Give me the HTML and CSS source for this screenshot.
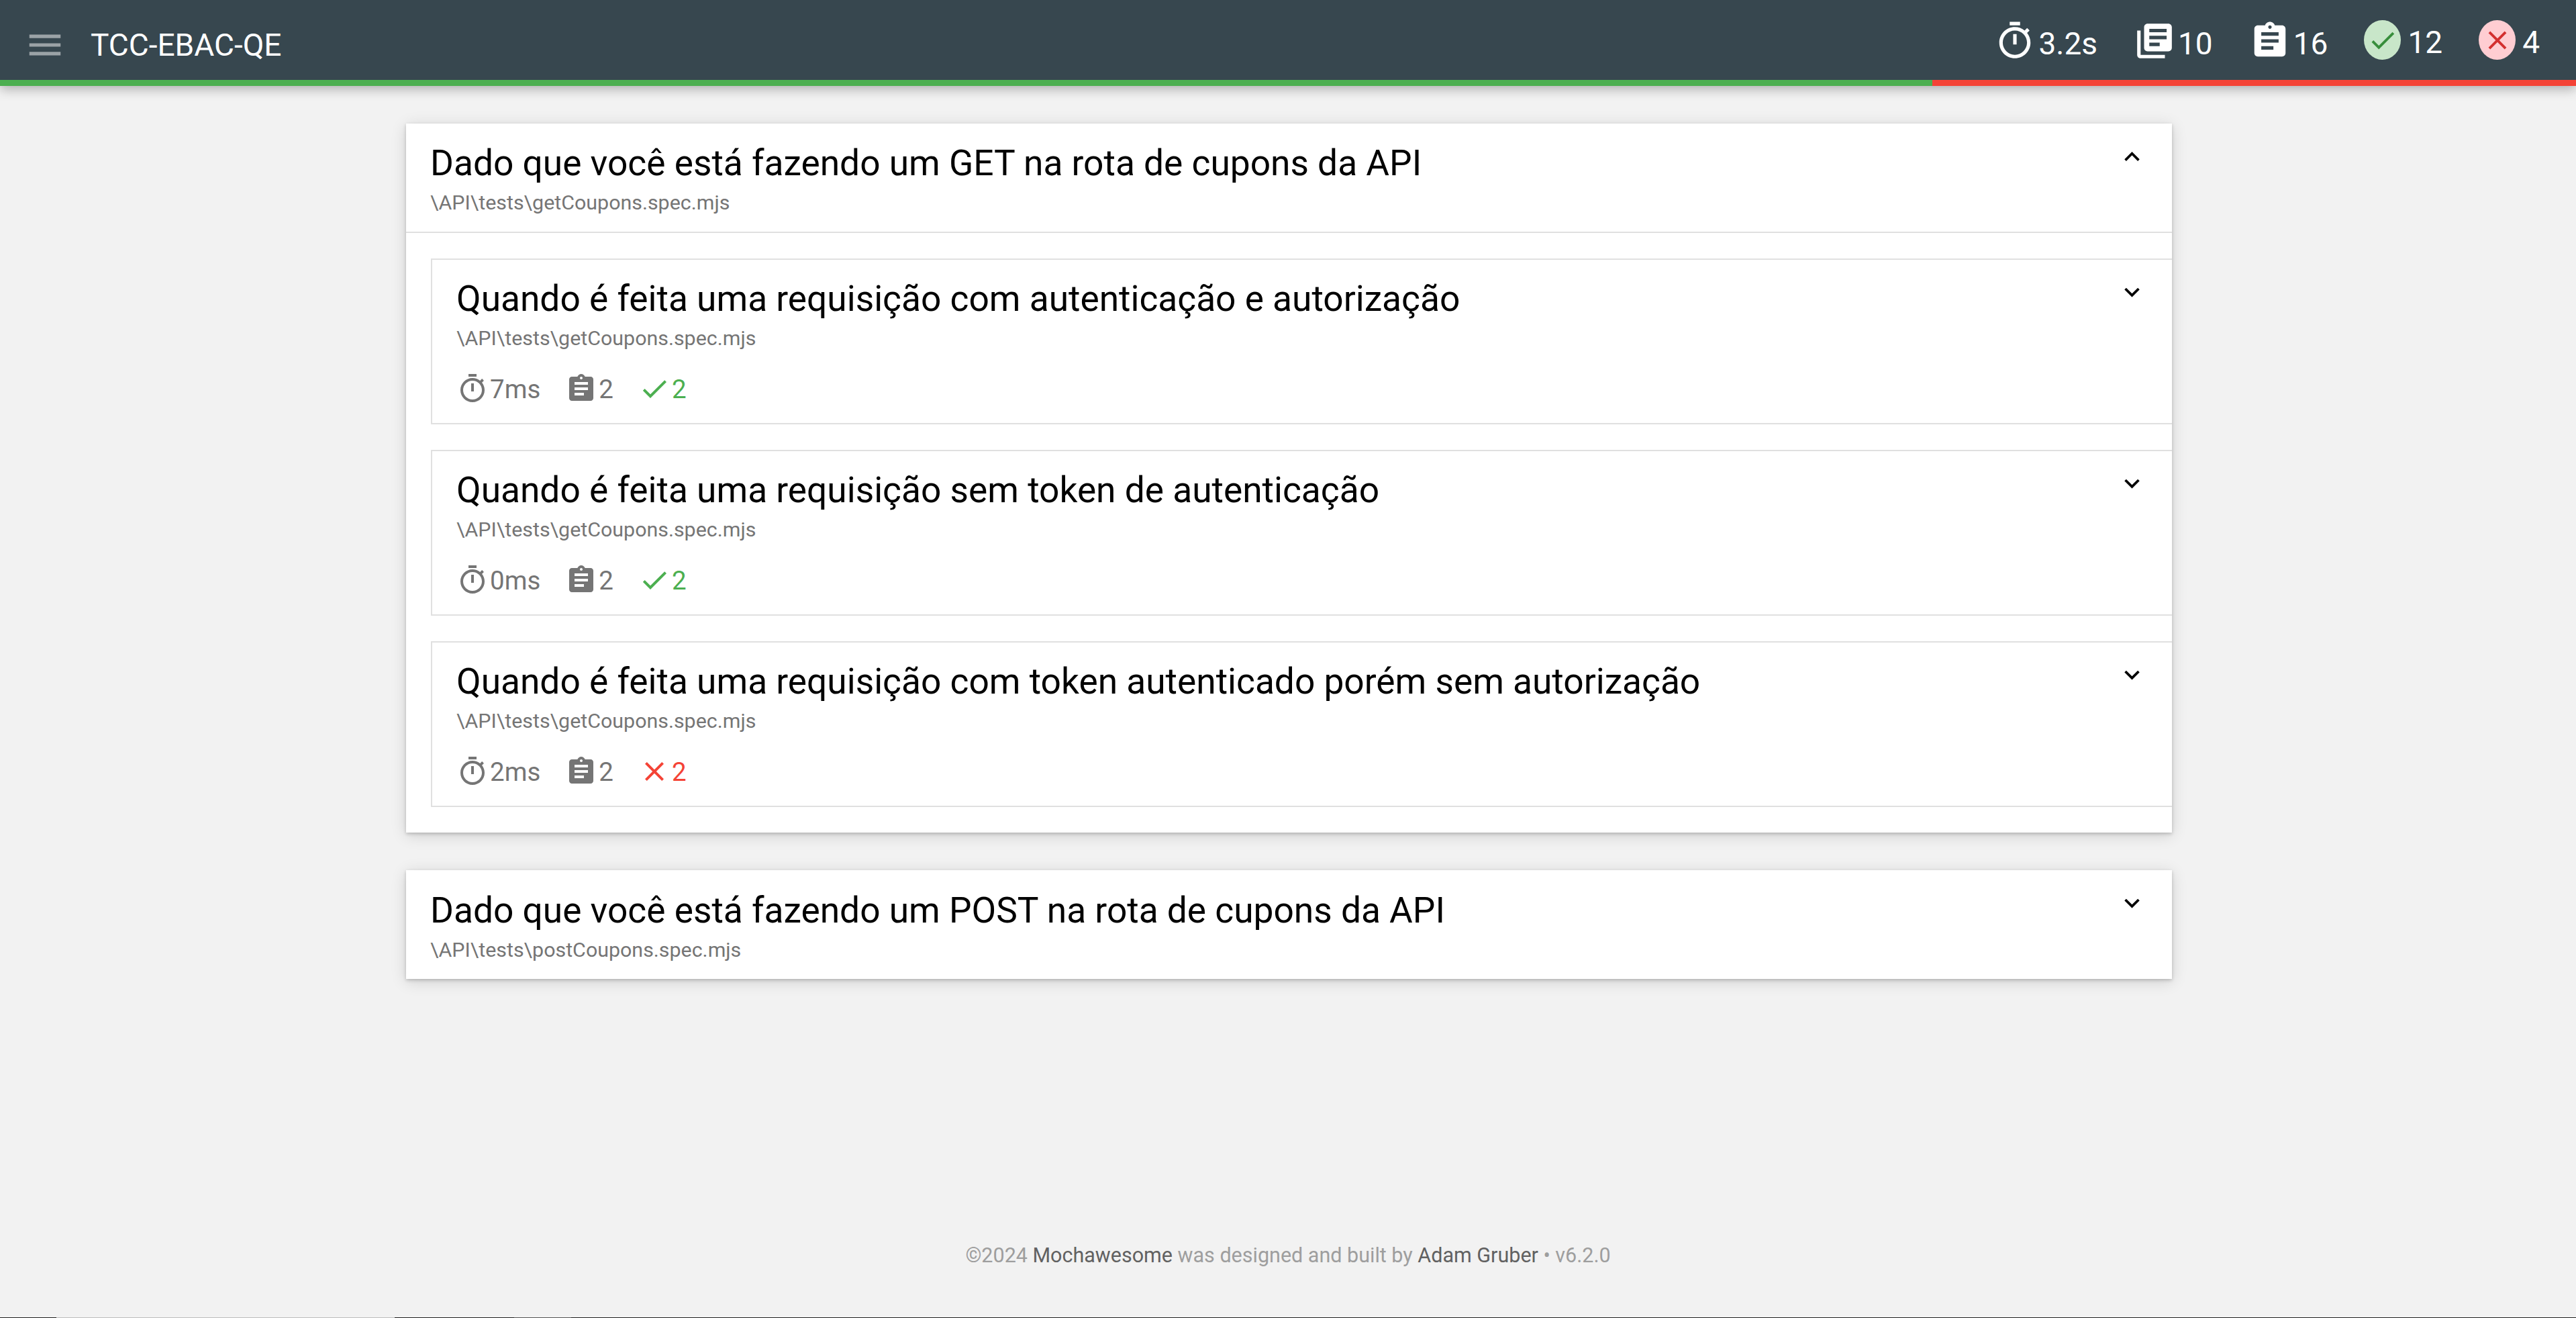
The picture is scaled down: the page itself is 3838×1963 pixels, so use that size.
FILE: index.html
```html
<!DOCTYPE html>
<html lang="pt-BR">
<head>
    <meta charset="UTF-8">
    <meta name="viewport" content="width=device-width, initial-scale=1.0">
    <title>TCC-EBAC-QE</title>
    <link rel="stylesheet" href="styles.css">
</head>
<body>
    <svg class="icon-defs" aria-hidden="true">
        <symbol id="i-menu" viewBox="0 0 24 24"><path d="M3 18h18v-2H3v2zm0-5h18v-2H3v2zm0-7v2h18V6H3z"/></symbol>
        <symbol id="i-timer" viewBox="0 0 24 24"><path d="M15 1H9v2h6V1zm-4 13h2V8h-2v6zm8.03-6.61l1.42-1.42c-.43-.51-.9-.99-1.41-1.41l-1.42 1.42C16.07 4.74 14.12 4 12 4c-4.97 0-9 4.03-9 9s4.02 9 9 9 9-4.03 9-9c0-2.12-.74-4.07-1.97-5.61zM12 20c-3.87 0-7-3.13-7-7s3.13-7 7-7 7 3.13 7 7-3.13 7-7 7z"/></symbol>
        <symbol id="i-books" viewBox="0 0 24 24"><path d="M4 6H2v14c0 1.1.9 2 2 2h14v-2H4V6zm16-4H8c-1.1 0-2 .9-2 2v12c0 1.1.9 2 2 2h12c1.1 0 2-.9 2-2V4c0-1.1-.9-2-2-2zm-1 9H9V9h10v2zm-4 4H9v-2h6v2zm4-8H9V5h10v2z"/></symbol>
        <symbol id="i-assign" viewBox="0 0 24 24"><path d="M19 3h-4.18C14.4 1.84 13.3 1 12 1c-1.3 0-2.4.84-2.82 2H5c-1.1 0-2 .9-2 2v14c0 1.1.9 2 2 2h14c1.1 0 2-.9 2-2V5c0-1.1-.9-2-2-2zm-7 0c.55 0 1 .45 1 1s-.45 1-1 1-1-.45-1-1 .45-1 1-1zm2 14H7v-2h7v2zm3-4H7v-2h10v2zm0-4H7V7h10v2z"/></symbol>
        <symbol id="i-check" viewBox="0 0 24 24"><path d="M9 16.17L4.83 12l-1.42 1.41L9 19 21 7l-1.41-1.41z"/></symbol>
        <symbol id="i-close" viewBox="0 0 24 24"><path d="M19 6.41L17.59 5 12 10.59 6.41 5 5 6.41 10.59 12 5 17.59 6.41 19 12 13.41 17.59 19 19 17.59 13.41 12z"/></symbol>
        <symbol id="i-down" viewBox="0 0 24 24"><path d="M7.41 7.84L12 12.42l4.59-4.58L18 9.25l-6 6-6-6z"/></symbol>
        <symbol id="i-up" viewBox="0 0 24 24"><path d="M7.41 15.41L12 10.83l4.59 4.58L18 14l-6-6-6 6z"/></symbol>
    </svg>

    <header class="navbar">
        <div class="nav-inner">
            <svg class="menu-icon"><use href="#i-menu"/></svg>
            <span class="report-title">TCC-EBAC-QE</span>
            <ul class="nav-stats">
                <li class="nav-stat"><svg><use href="#i-timer"/></svg><span>3.2s</span></li>
                <li class="nav-stat"><svg><use href="#i-books"/></svg><span>10</span></li>
                <li class="nav-stat"><svg><use href="#i-assign"/></svg><span>16</span></li>
                <li class="nav-stat nav-stat-circle">
                    <span class="circle circle-pass"><svg><use href="#i-check"/></svg></span><span>12</span>
                </li>
                <li class="nav-stat nav-stat-circle">
                    <span class="circle circle-fail"><svg><use href="#i-close"/></svg></span><span>4</span>
                </li>
            </ul>
        </div>
        <div class="progress">
            <div class="progress-pass"></div>
            <div class="progress-fail"></div>
        </div>
    </header>

    <main class="details">
        <section class="suite">
            <div class="suite-header">
                <div class="suite-text">
                    <h3 class="suite-title">Dado que você está fazendo um GET na rota de cupons da API</h3>
                    <div class="suite-file">\API\tests\getCoupons.spec.mjs</div>
                </div>
                <svg class="toggle"><use href="#i-up"/></svg>
            </div>
            <div class="suite-body">
                <div class="sub-suite">
                    <div class="sub-text">
                        <h4 class="suite-title">Quando é feita uma requisição com autenticação e autorização</h4>
                        <div class="suite-file">\API\tests\getCoupons.spec.mjs</div>
                        <ul class="sub-stats">
                            <li class="sub-stat"><svg><use href="#i-timer"/></svg>7ms</li>
                            <li class="sub-stat"><svg><use href="#i-assign"/></svg>2</li>
                            <li class="sub-stat stat-pass"><svg><use href="#i-check"/></svg>2</li>
                        </ul>
                    </div>
                    <svg class="toggle"><use href="#i-down"/></svg>
                </div>
                <div class="sub-suite">
                    <div class="sub-text">
                        <h4 class="suite-title">Quando é feita uma requisição sem token de autenticação</h4>
                        <div class="suite-file">\API\tests\getCoupons.spec.mjs</div>
                        <ul class="sub-stats">
                            <li class="sub-stat"><svg><use href="#i-timer"/></svg>0ms</li>
                            <li class="sub-stat"><svg><use href="#i-assign"/></svg>2</li>
                            <li class="sub-stat stat-pass"><svg><use href="#i-check"/></svg>2</li>
                        </ul>
                    </div>
                    <svg class="toggle"><use href="#i-down"/></svg>
                </div>
                <div class="sub-suite">
                    <div class="sub-text">
                        <h4 class="suite-title">Quando é feita uma requisição com token autenticado porém sem autorização</h4>
                        <div class="suite-file">\API\tests\getCoupons.spec.mjs</div>
                        <ul class="sub-stats">
                            <li class="sub-stat"><svg><use href="#i-timer"/></svg>2ms</li>
                            <li class="sub-stat"><svg><use href="#i-assign"/></svg>2</li>
                            <li class="sub-stat stat-fail"><svg><use href="#i-close"/></svg>2</li>
                        </ul>
                    </div>
                    <svg class="toggle"><use href="#i-down"/></svg>
                </div>
            </div>
        </section>

        <section class="suite">
            <div class="suite-header suite-header-closed">
                <div class="suite-text">
                    <h3 class="suite-title">Dado que você está fazendo um POST na rota de cupons da API</h3>
                    <div class="suite-file">\API\tests\postCoupons.spec.mjs</div>
                </div>
                <svg class="toggle"><use href="#i-down"/></svg>
            </div>
        </section>
    </main>

    <footer class="footer">
        <p>©2024 <a href="#">Mochawesome</a> was designed and built by <a href="#">Adam Gruber</a> • v6.2.0</p>
    </footer>

    <div class="window-edge">
        <div class="edge-dark edge-a"></div>
        <div class="edge-light"></div>
        <div class="edge-dark edge-b"></div>
        <div class="edge-mid"></div>
        <div class="edge-dark edge-c"></div>
    </div>
</body>
</html>
```

FILE: styles.css
```css
* {
    box-sizing: border-box;
}
html, body {
    margin: 0;
    height: 100%;
}
body {
    display: flex;
    flex-direction: column;
    min-height: 1963px;
    height: 1963px;
    overflow: hidden;
    font-family: Roboto, "Liberation Sans", sans-serif;
    background-color: #f2f2f2;
    color: #000;
}
ul {
    list-style: none;
    margin: 0;
    padding: 0;
}
svg {
    fill: currentColor;
    flex: none;
}
.icon-defs {
    display: none;
}

/* navbar */
.navbar {
    flex: none;
    background-color: #37474f;
    color: #fff;
    box-shadow: 0 5px 16px rgba(0,0,0,0.28);
    position: relative;
}
.nav-inner {
    display: flex;
    align-items: center;
    height: 119px;
    padding: 0 54px 0 36px;
}
.menu-icon {
    width: 62px;
    height: 62px;
    color: rgba(255,255,255,0.5);
    margin: 14px 37px 0 0;
}
.report-title {
    font-size: 46px;
    flex: 1;
    padding-top: 14px;
}
.nav-stats {
    display: flex;
    align-items: center;
    gap: 54px;
}
.nav-stat {
    display: flex;
    align-items: center;
    gap: 4px;
    font-size: 46px;
}
.nav-stat svg {
    width: 62px;
    height: 62px;
    margin-top: 3px;
}
.nav-stat > span:last-child {
    margin-top: 11px;
}
.nav-stat-circle {
    gap: 10px;
}
.nav-stat-circle > span:last-child {
    margin-top: 6px;
}
.circle {
    display: flex;
    align-items: center;
    justify-content: center;
    width: 55px;
    height: 59px;
    border-radius: 50%;
}
.nav-stat .circle svg {
    width: 46px;
    height: 46px;
    margin-top: 0;
}
.circle-pass {
    background-color: #c8e6c9;
    color: #388e3c;
}
.circle-fail {
    background-color: #ffcdd2;
    color: #d32f2f;
}
.progress {
    display: flex;
    height: 9px;
}
.progress-pass {
    flex: 12;
    background-color: #4caf50;
}
.progress-fail {
    flex: 4;
    background-color: #f44336;
}

/* suites */
.details {
    flex: 1;
    width: 2631px;
    margin-left: 605px;
    padding-top: 56px;
    display: flex;
    flex-direction: column;
    gap: 56px;
}
.suite {
    background-color: #fff;
    box-shadow: 0 4px 22px rgba(0,0,0,0.14), 0 2px 5px rgba(0,0,0,0.2);
}
.suite-header {
    display: flex;
    align-items: flex-start;
    justify-content: space-between;
    height: 163px;
    padding: 28px 37px 0 36px;
    border-bottom: 2px solid #e0e0e0;
}
.suite-header .suite-file {
    margin-top: 8px;
}
.suite-header .toggle {
    margin-top: -1px;
}
.suite-header-closed {
    height: 162px;
    padding-top: 29px;
    border-bottom: none;
}
.suite-title {
    margin: 0;
    font-size: 53.25px;
    font-weight: 400;
    line-height: 62px;
}
.suite-file {
    font-size: 30.4px;
    line-height: 40px;
    margin-top: 8px;
    color: #757575;
}
.toggle {
    width: 45px;
    height: 45px;
}
.suite-body {
    display: flex;
    flex-direction: column;
    gap: 38px;
    padding: 38px 0 38px 37px;
}
.sub-suite {
    display: flex;
    align-items: flex-start;
    justify-content: space-between;
    height: 247px;
    padding: 27px 37px 0 36px;
    border: 2px solid #e0e0e0;
    border-right: none;
}
.sub-stats {
    display: flex;
    align-items: center;
    gap: 37px;
    margin-top: 31px;
}
.sub-stat {
    display: flex;
    align-items: center;
    gap: 2px;
    font-size: 38.5px;
    color: #757575;
}
.sub-stat svg {
    width: 48px;
    height: 48px;
}
.stat-pass {
    color: #4caf50;
}
.stat-fail {
    color: #f44336;
}

/* footer */
.footer {
    flex: none;
    height: 187px;
    padding-top: 77px;
    text-align: center;
    font-size: 30.5px;
    color: #9e9e9e;
}
.footer p {
    margin: 0;
}
.footer a {
    color: #616161;
    text-decoration: none;
}

/* tira escura no fim da janela */
.window-edge {
    flex: none;
    display: flex;
    height: 1px;
}
.edge-dark {
    background-color: #202020;
}
.edge-a {
    width: 84px;
}
.edge-light {
    width: 504px;
    background-color: #bdbdbd;
}
.edge-b {
    width: 178px;
}
.edge-mid {
    width: 85px;
    background-color: #555;
}
.edge-c {
    flex: 1;
}
```
